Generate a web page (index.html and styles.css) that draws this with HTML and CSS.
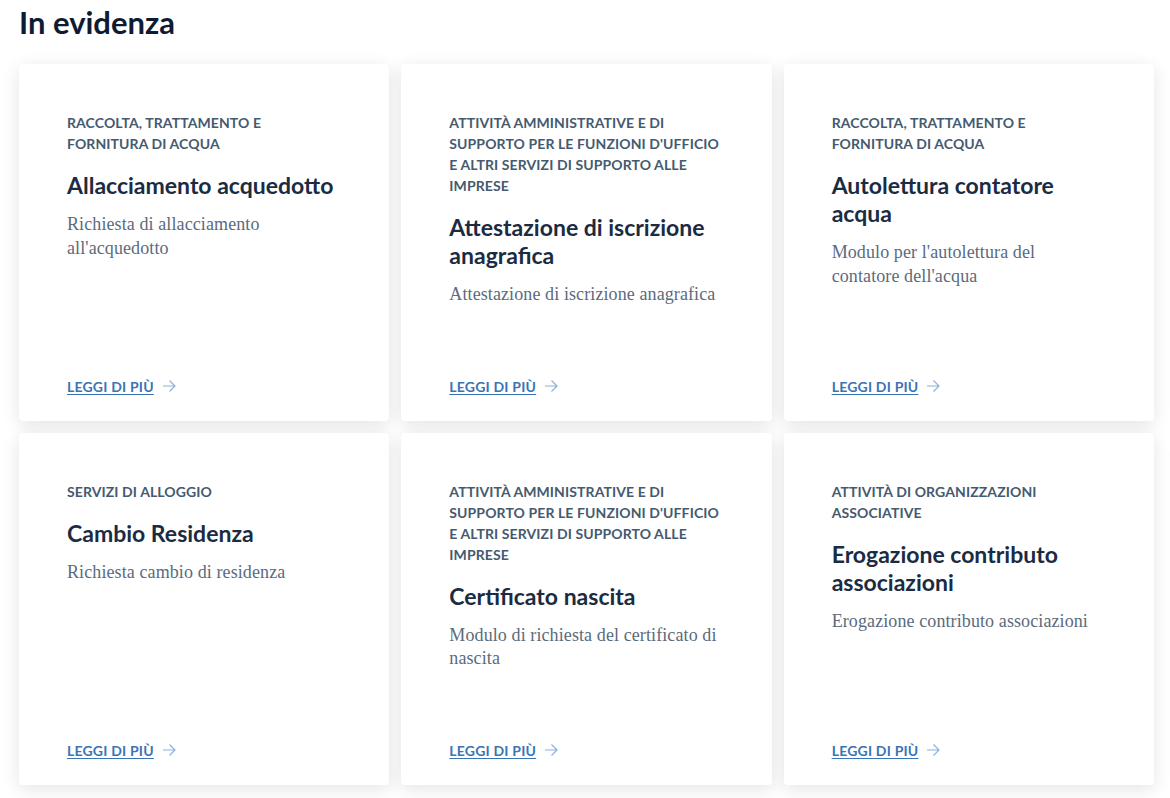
FILE: index.html
```html
<!DOCTYPE html>
<html lang="it">
<head>
<meta charset="utf-8">
<title>In evidenza</title>
<link rel="stylesheet" href="styles.css">
</head>
<body>
<section class="evidenza">
  <h2 class="section-title">In evidenza</h2>
  <div class="card-grid">
    <article class="card">
      <p class="category">Raccolta, trattamento e fornitura di acqua</p>
      <h3 class="card-title">Allacciamento acquedotto</h3>
      <p class="card-text">Richiesta di allacciamento all'acquedotto</p>
      <a class="read-more" href="#"><span class="read-more-text">Leggi di più</span><svg class="arrow" width="13" height="12" viewBox="0 0 13 12"><path d="M0 6H12M6.5 0.5L12 6L6.5 11.5" fill="none" stroke="currentColor" stroke-width="1.2"/></svg></a>
    </article>
    <article class="card">
      <p class="category">Attività amministrative e di supporto per le funzioni d'ufficio e altri servizi di supporto alle imprese</p>
      <h3 class="card-title">Attestazione di iscrizione anagrafica</h3>
      <p class="card-text">Attestazione di iscrizione anagrafica</p>
      <a class="read-more" href="#"><span class="read-more-text">Leggi di più</span><svg class="arrow" width="13" height="12" viewBox="0 0 13 12"><path d="M0 6H12M6.5 0.5L12 6L6.5 11.5" fill="none" stroke="currentColor" stroke-width="1.2"/></svg></a>
    </article>
    <article class="card">
      <p class="category">Raccolta, trattamento e fornitura di acqua</p>
      <h3 class="card-title">Autolettura contatore acqua</h3>
      <p class="card-text">Modulo per l'autolettura del contatore dell'acqua</p>
      <a class="read-more" href="#"><span class="read-more-text">Leggi di più</span><svg class="arrow" width="13" height="12" viewBox="0 0 13 12"><path d="M0 6H12M6.5 0.5L12 6L6.5 11.5" fill="none" stroke="currentColor" stroke-width="1.2"/></svg></a>
    </article>
    <article class="card">
      <p class="category">Servizi di alloggio</p>
      <h3 class="card-title">Cambio Residenza</h3>
      <p class="card-text">Richiesta cambio di residenza</p>
      <a class="read-more" href="#"><span class="read-more-text">Leggi di più</span><svg class="arrow" width="13" height="12" viewBox="0 0 13 12"><path d="M0 6H12M6.5 0.5L12 6L6.5 11.5" fill="none" stroke="currentColor" stroke-width="1.2"/></svg></a>
    </article>
    <article class="card">
      <p class="category">Attività amministrative e di supporto per le funzioni d'ufficio e altri servizi di supporto alle imprese</p>
      <h3 class="card-title">Certificato nascita</h3>
      <p class="card-text">Modulo di richiesta del certificato di nascita</p>
      <a class="read-more" href="#"><span class="read-more-text">Leggi di più</span><svg class="arrow" width="13" height="12" viewBox="0 0 13 12"><path d="M0 6H12M6.5 0.5L12 6L6.5 11.5" fill="none" stroke="currentColor" stroke-width="1.2"/></svg></a>
    </article>
    <article class="card">
      <p class="category">Attività di organizzazioni associative</p>
      <h3 class="card-title">Erogazione contributo associazioni</h3>
      <p class="card-text">Erogazione contributo associazioni</p>
      <a class="read-more" href="#"><span class="read-more-text">Leggi di più</span><svg class="arrow" width="13" height="12" viewBox="0 0 13 12"><path d="M0 6H12M6.5 0.5L12 6L6.5 11.5" fill="none" stroke="currentColor" stroke-width="1.2"/></svg></a>
    </article>
  </div>
</section>
</body>
</html>
```
FILE: styles.css
```css
html, body {
  margin: 0;
  padding: 0;
  background: #ffffff;
}

body {
  font-family: Lato, "Open Sans", sans-serif;
  color: #1a2b42;
}

.evidenza {
  padding: 2px 16px 13px 19px;
}

.section-title {
  margin: 0 0 22px;
  font-family: Lato, sans-serif;
  font-size: 31px;
  font-weight: 700;
  line-height: 40px;
  color: #0e1b33;
}

.card-grid {
  display: grid;
  grid-template-columns: repeat(3, 1fr);
  gap: 12px;
}

.card {
  display: flex;
  flex-direction: column;
  background: #ffffff;
  border-radius: 4px;
  box-shadow: 0 4px 18px rgba(0, 0, 0, 0.11);
  padding: 48px 48px 24px;
}

.category {
  margin: 0 0 17px;
  font-family: Lato, sans-serif;
  font-size: 14px;
  font-weight: 700;
  line-height: 21px;
  letter-spacing: 0.1px;
  text-transform: uppercase;
  color: #455a6f;
}

.card-title {
  margin: 0 0 14px;
  font-family: Lato, sans-serif;
  font-size: 23px;
  font-weight: 700;
  line-height: 28px;
  color: #1a2b42;
}

.card-text {
  margin: 0 0 69px;
  font-family: "Liberation Serif", serif;
  font-size: 18px;
  line-height: 23.5px;
  letter-spacing: 0.1px;
  color: #5b6b7c;
}

.read-more {
  margin-top: auto;
  display: flex;
  align-items: center;
  gap: 9px;
  line-height: 21px;
  text-decoration: none;
}

.read-more-text {
  font-family: Lato, sans-serif;
  font-size: 14px;
  font-weight: 700;
  letter-spacing: 0.2px;
  text-transform: uppercase;
  color: #3a74b6;
  text-decoration: underline;
  text-underline-offset: 2px;
}

.arrow {
  color: #8db0dc;
}
```
